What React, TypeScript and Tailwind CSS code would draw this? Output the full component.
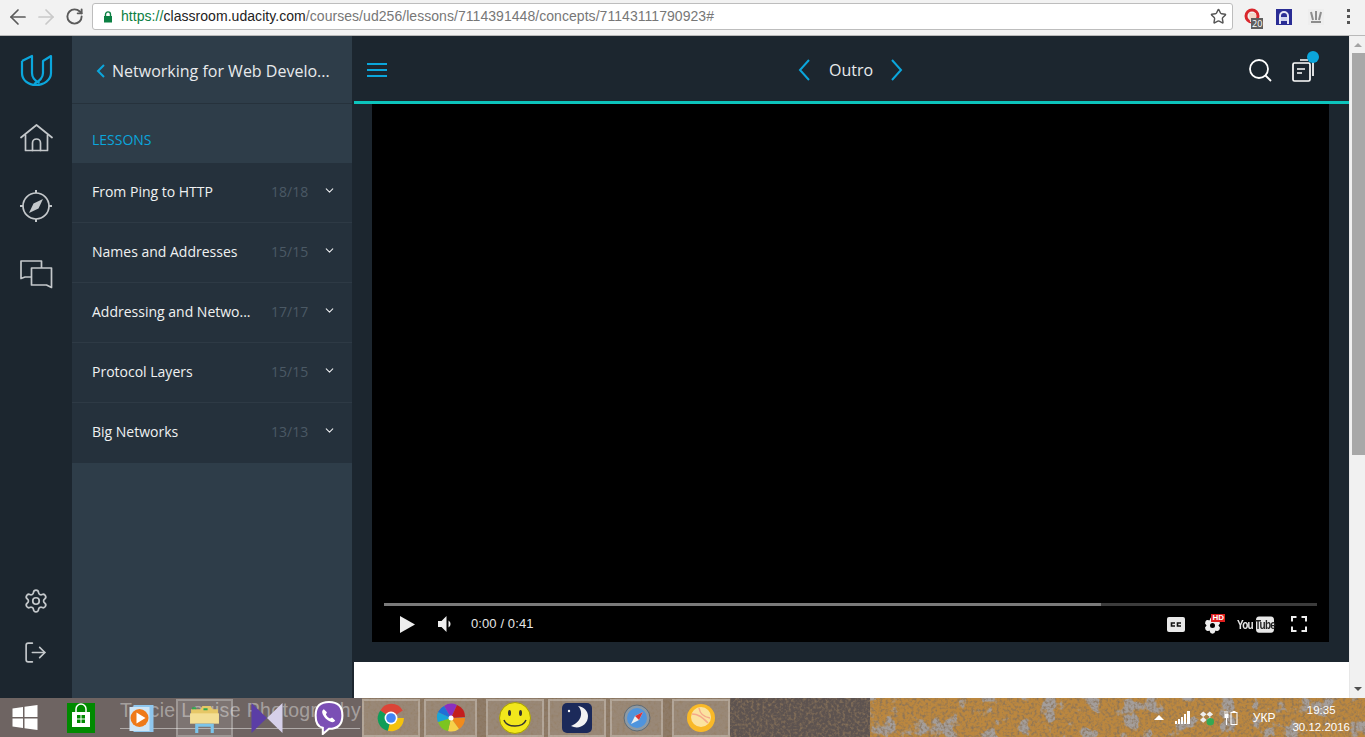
import { ReactNode } from "react"
import { ArrowLeft, ArrowRight, ChevronDown, LogOut, RotateCw, Settings, Star } from "lucide-react"

const lessons = [
  { title: "From Ping to HTTP", count: "18/18" },
  { title: "Names and Addresses", count: "15/15" },
  { title: "Addressing and Netwo...", count: "17/17" },
  { title: "Protocol Layers", count: "15/15" },
  { title: "Big Networks", count: "13/13" },
]

const Toolbar = () => (
  <div className="flex h-9 shrink-0 items-center border-b border-[#b9b9b9] bg-[#f2f2f2] pb-[2px] pl-[6px] font-['Open_Sans',sans-serif]">
    <ArrowLeft size={24} strokeWidth={1.7} className="shrink-0 text-[#5a5a5a]" />
    <ArrowRight size={24} strokeWidth={1.7} className="ml-[4px] shrink-0 text-[#c9c9c9]" />
    <RotateCw size={19} strokeWidth={2.4} className="ml-[7px] shrink-0 text-[#5a5a5a]" />
    <div className="ml-[8px] flex h-[27px] w-[1141px] shrink-0 items-center rounded-[3px] border border-[#bdbdbd] bg-white pl-[10px] pr-[5px]">
      <svg width="10" height="12" viewBox="0 0 10 12" className="shrink-0">
        <path d="M2.5 5V3.4a2.5 2.5 0 0 1 5 0V5" fill="none" stroke="#0b8043" strokeWidth="1.4" />
        <rect x="1" y="5" width="8" height="6.5" fill="#0b8043" />
      </svg>
      <span className="ml-[8px] whitespace-nowrap font-['Liberation_Sans',sans-serif] text-[14px] tracking-[0.05px] text-[#777]">
        <span className="text-[#0b8043]">https://</span>
        <span className="text-[#222]">classroom.udacity.com</span>
        /courses/ud256/lessons/7114391448/concepts/71143111790923#
      </span>
      <Star size={17} strokeWidth={2} className="ml-auto text-[#555]" />
    </div>
    {/* extension icons */}
    <div className="relative ml-[11px] h-[18px] w-[18px] shrink-0">
      <svg width="18" height="18" viewBox="0 0 18 18">
        <circle cx="8" cy="8" r="6" fill="none" stroke="#d9262c" strokeWidth="3" />
        <path d="M5 5h7v6l-3 3H6z" fill="#f4d6c8" />
      </svg>
      <span className="absolute left-[7px] top-[10px] bg-[#5f5f5f] px-[1px] text-[9px] leading-[11px] text-white">20</span>
    </div>
    <svg width="16" height="16" viewBox="0 0 16 16" className="ml-[14px] shrink-0">
      <rect width="16" height="16" fill="#2a2d95" />
      <path d="M3 15V7a5 5 0 0 1 10 0v8h-2V7a3 3 0 0 0-6 0v8z" fill="#e8e8f5" />
      <rect x="5" y="8" width="6" height="4" fill="#cfd3ef" />
    </svg>
    <svg width="16" height="16" viewBox="0 0 16 16" className="ml-[16px] shrink-0">
      <rect width="16" height="16" fill="#eeeeee" />
      <path d="M3 3l2 8M8 2v9M13 3l-2 8M3 13h10" stroke="#8d8d8d" strokeWidth="2" fill="none" />
    </svg>
    <div className="ml-[23px] flex flex-col gap-[3px]">
      <span className="h-[3px] w-[3px] bg-[#555]" />
      <span className="h-[3px] w-[3px] bg-[#555]" />
      <span className="h-[3px] w-[3px] bg-[#555]" />
    </div>
  </div>
)

const Rail = () => (
  <div className="flex w-[72px] shrink-0 flex-col items-center bg-[#1c262f] text-[#c4c8cb]">
    <svg width="33" height="33" viewBox="0 0 33 33" fill="none" stroke="#0ba6dc" strokeWidth="2.2" strokeLinejoin="round" className="ml-[1px] mt-[18px]">
      <path d="M2 7 12 2V19C12 24 15 27 19.500 29" />
      <path d="M2 7V19C2 26 8 31 16 31 24 31 31 26 31 19V2L23 7V19C23 23 20 27 14 30" />
    </svg>
    <svg width="33" height="28" viewBox="0 0 33 28" fill="none" stroke="currentColor" strokeWidth="1.7" strokeLinejoin="round" strokeLinecap="round" className="mt-[37px]">
      <path d="M1 13.500 16.500 1 32 13.500" />
      <path d="M5.500 11v15.500h22V11" />
      <path d="M12.500 26.500V19a4 4 0 0 1 8 0v7.500" />
    </svg>
    <svg width="32" height="32" viewBox="0 0 32 32" fill="none" stroke="currentColor" strokeWidth="1.7" className="mt-[38px]">
      <circle cx="16" cy="16" r="13" />
      <path d="M16 0v3M16 29v3M0 16h3M29 16h3" strokeWidth="2" />
      <path d="M23 9 18.500 18.500 9 23l4.500-9.500z" fill="currentColor" stroke="none" />
    </svg>
    <svg width="33" height="29" viewBox="0 0 33 29" fill="none" stroke="currentColor" strokeWidth="1.7" strokeLinejoin="round" className="mt-[38px]">
      <path d="M11 17H5L1 18.500V1h20.500v7" />
      <path d="M11.500 8h20v19.500l-5-2.500h-15z" />
    </svg>
    <Settings size={26} strokeWidth={1.6} className="-ml-[1px] mt-auto" />
    <LogOut size={25} strokeWidth={1.6} className="-ml-[1px] mb-[33px] mt-[26px] -scale-x-100 rotate-180" />
  </div>
)

const Sidebar = () => (
  <div className="flex w-[280px] shrink-0 flex-col bg-[#2e3d49] font-['Open_Sans',sans-serif]">
    <div className="flex h-[68px] shrink-0 items-center border-b border-[#26323c] pl-[24px] pt-[2px]">
      <svg width="9" height="14" viewBox="0 0 9 14" fill="none" stroke="#0ba6dc" strokeWidth="2">
        <path d="M8 1 2 7l6 6" />
      </svg>
      <span className="ml-[7px] whitespace-nowrap text-[16px] text-[#e8eaec]">Networking for Web Develo...</span>
    </div>
    <div className="flex h-[59px] shrink-0 items-center pl-[20px] pt-[12px] text-[14px] text-[#0ba6dc]">LESSONS</div>
    {lessons.map((l) => (
      <div key={l.title} className="flex h-[60px] shrink-0 items-center border-b border-[#2e3a45] bg-[#25313c] pb-[2px] pl-[20px] last:border-b-transparent">
        <span className="w-[178px] whitespace-nowrap text-[14px] text-[#f0f1f2]">{l.title}</span>
        <span className="ml-[1px] w-[52px] text-[14px] text-[#4b5965]">{l.count}</span>
        <ChevronDown size={13} strokeWidth={2} className="mb-[3px] text-[#e8eaec]" />
      </div>
    ))}
  </div>
)

const PlayerControls = () => (
  <div className="mt-auto px-[12px] pb-[5px] font-['Liberation_Sans',sans-serif]">
    <div className="flex h-[3px]">
      <div className="w-[717px] bg-[#7a7a7a]" />
      <div className="flex-1 bg-[#3c3c3c]" />
    </div>
    <div className="mt-[5px] flex h-[26px] items-center text-[13px] text-[#e6e6e6]">
      <svg width="15" height="17" viewBox="0 0 15 17" className="ml-[16px]"><path d="M0 0 15 8.500 0 17z" fill="#eee" /></svg>
      <svg width="17" height="16" viewBox="0 0 17 16" className="ml-[22px]">
        <path d="M1 5h3.500L9.500 0v16L4.500 11H1z" fill="#eee" />
        <path d="M11.500 4.500a4 4 0 0 1 0 7z" fill="#eee" />
      </svg>
      <span className="ml-[17px] tracking-[0.1px]">0:00 / 0:41</span>
      <svg width="18" height="15" viewBox="0 0 18 15" className="ml-auto">
        <rect width="18" height="15" rx="2" fill="#e8e8e8" />
        <path d="M8 6H4.500v3H8M14 6h-3.500v3H14" fill="none" stroke="#111" strokeWidth="1.600" />
      </svg>
      <div className="relative ml-[19px] h-[18px] w-[19px]">
        <Settings size={17} strokeWidth={3} className="absolute top-[2px] fill-[#eee] text-[#eee]" />
        <span className="absolute left-[6px] top-[8px] h-[5px] w-[5px] rounded-full bg-black" />
        <span className="absolute -right-[2px] -top-[1px] bg-[#e01e1e] px-[1px] text-[8px] font-bold leading-[8px] text-white">HD</span>
      </div>
      <div className="ml-[14px] flex h-[17px] w-[37px] scale-y-125 items-center text-[10px] font-bold tracking-[-0.8px]">
        <span className="w-[19px] text-[#e8e8e8]">You</span>
        <span className="flex h-[13px] w-[18px] items-center justify-center rounded-[3px] bg-[#e8e8e8] text-[#222]">Tube</span>
      </div>
      <svg width="16" height="16" viewBox="0 0 16 16" fill="none" stroke="#eee" strokeWidth="2" className="ml-[17px] mr-[10px]">
        <path d="M1 5.500V1h4.500M10.500 1H15v4.500M15 10.500V15h-4.500M5.500 15H1v-4.500" />
      </svg>
    </div>
  </div>
)

const Main = () => (
  <div className="flex min-w-0 flex-1 flex-col bg-[#1c262f] pl-[2px]">
    <div className="flex h-[65px] shrink-0 items-center pl-[13px] pt-[3px] font-['Open_Sans',sans-serif]">
      <div className="flex flex-col gap-[4px]">
        <span className="h-[2px] w-[20px] bg-[#0ba6dc]" />
        <span className="h-[2px] w-[20px] bg-[#0ba6dc]" />
        <span className="h-[2px] w-[20px] bg-[#0ba6dc]" />
      </div>
      <div className="ml-[411px] flex items-center">
        <svg width="12" height="22" viewBox="0 0 12 22" fill="none" stroke="#0ba6dc" strokeWidth="2">
          <path d="M11 1 2 11l9 10" />
        </svg>
        <span className="ml-[19px] w-[44px] whitespace-nowrap text-[16px] text-[#e8eaec]">Outro</span>
        <svg width="12" height="22" viewBox="0 0 12 22" fill="none" stroke="#0ba6dc" strokeWidth="2" className="ml-[18px]">
          <path d="M1 1l9 10-9 10" />
        </svg>
      </div>
      <svg width="23" height="23" viewBox="0 0 23 23" fill="none" stroke="#fff" strokeWidth="1.800" className="ml-auto">
        <circle cx="10" cy="10" r="9" />
        <path d="M16.500 16.500 22 22" />
      </svg>
      <div className="relative ml-[20px] mr-[31px] h-[26px] w-[26px]">
        <svg width="26" height="26" viewBox="0 0 26 26" fill="none" stroke="#fff" strokeWidth="1.700">
          <rect x="1" y="6" width="17" height="18" rx="1.500" />
          <path d="M5 12h8M5 16h5M8 3h8M21 4v15" />
        </svg>
        <span className="absolute -right-[1px] -top-[6px] h-[12px] w-[12px] rounded-full bg-[#0ba6dc]" />
      </div>
    </div>
    <div className="h-[3px] shrink-0 bg-[#0cc4bc]" />
    <div className="flex h-[558px] shrink-0 pb-[20px] pl-[18px] pr-[20px]">
      <div className="flex flex-1 flex-col bg-black">
        <PlayerControls />
      </div>
    </div>
    <div className="flex-1 bg-white" />
  </div>
)

const Scrollbar = () => (
  <div className="flex w-[16px] shrink-0 flex-col items-center border-l border-[#e7e7e7] bg-[#f1f1f1]">
    <div className="flex h-[17px] w-full items-center justify-center">
      <span className="border-x-[4px] border-b-[4px] border-x-transparent border-b-[#a3a3a3]" />
    </div>
    <div className="ml-[2px] h-[402px] w-[14px] bg-[#a8a8a8]" />
    <div className="mb-[7px] mt-auto border-x-[4px] border-t-[4px] border-x-transparent border-t-[#505050]" />
  </div>
)

const Slot = ({ w, children }: { w: number; children: ReactNode }) => (
  <div style={{ width: w }} className="flex h-[38px] shrink-0 items-center justify-center border-2 border-white/25 bg-white/10">
    {children}
  </div>
)

const Wallpaper = () => (
  <svg width="1365" height="39" viewBox="0 0 1365 39" className="absolute inset-0">
    <defs>
      <filter id="grain" x="0" y="0" width="100%" height="100%">
        <feTurbulence type="fractalNoise" baseFrequency="0.35" numOctaves="2" seed="4" />
        <feColorMatrix values="0 0 0 0 0.25 0 0 0 0 0.17 0 0 0 0 0.1 0 0 0 2.4 -1.05" />
      </filter>
      <filter id="patches" x="0" y="0" width="100%" height="100%">
        <feTurbulence type="fractalNoise" baseFrequency="0.05" numOctaves="4" seed="23" />
        <feColorMatrix values="0 0 0 0 0.37 0 0 0 0 0.34 0 0 0 0 0.33 0 0 0 12 -6.9" />
      </filter>
    </defs>
    <rect width="1365" height="39" fill="#6e6462" />
    <rect x="362" width="368" height="39" fill="#8e7b68" />
    <rect x="730" width="140" height="39" fill="#5d5350" />
    <rect x="870" width="495" height="39" fill="#bb873f" />
    <rect x="870" width="495" height="39" filter="url(#patches)" />
    <rect x="362" width="1003" height="39" filter="url(#grain)" />
  </svg>
)

const Taskbar = () => (
  <div className="relative h-[39px] shrink-0 overflow-hidden font-['Liberation_Sans',sans-serif]">
    <Wallpaper />
    <span className="absolute left-[120px] top-0 whitespace-nowrap text-[19.500px] leading-[25px] tracking-[0.35px] text-white/40">Tracie Louise Photography</span>
    <span className="absolute left-[120px] top-[30px] h-[1px] w-[240px] bg-white/45" />
    <div className="relative flex h-full items-center">
      <svg width="26" height="25" viewBox="0 0 25 25" className="ml-[12px] shrink-0">
        <path d="M0 3.500 10.500 2v10H0zM12 1.800 25 0v12H12zM0 13.500h10.500V23L0 21.500zM12 13.500h13V25l-13-1.800z" fill="#fff" />
      </svg>
      <svg width="30" height="30" viewBox="0 0 28 30" className="ml-[28px] shrink-0">
        <rect width="28" height="30" fill="#008a00" />
        <path d="M9 9V6a5 5 0 0 1 10 0v3" fill="none" stroke="#fff" strokeWidth="1.500" />
        <path d="M5 9h18v15H5z" fill="#fff" />
        <path d="M10 12h3.500v3.500H10zM14.500 12H18v3.500h-3.500zM10 16.500h3.500V20H10zM14.500 16.500H18V20h-3.500z" fill="#008a00" />
      </svg>
      <svg width="27" height="30" viewBox="0 0 26 30" className="ml-[32px] shrink-0">
        <rect x="5" y="2" width="20" height="27" fill="#8fc7ef" />
        <rect x="1" y="4" width="20" height="24" fill="#cfe6f7" />
        <circle cx="11" cy="15" r="9" fill="#ef7a1a" />
        <path d="M8 9.500 17 15l-9 5.500z" fill="#fff" />
      </svg>
      <div className="ml-[21px] mt-[1px] shrink-0">
        <Slot w={57}>
          <svg width="31" height="31" viewBox="0 0 30 30">
            <path d="M2 6h9l2-3h8l2 3h5v12H2z" fill="#e6c766" />
            <path d="M3 4h4v2H3zM14 5h4v2h-4z" fill="#2fa84f" />
            <path d="M1 10h28v10H1z" fill="#f3de94" />
            <path d="M6 20h18v9h-3v-6H9v6H6z" fill="#7cc4ea" />
          </svg>
        </Slot>
      </div>
      <svg width="32" height="32" viewBox="0 0 31 32" className="ml-[18px] shrink-0">
        <path d="M0 1 15.500 16 0 31z" fill="#5b3ea6" />
        <path d="M31 1 15.500 16 31 31z" fill="#d6d0ea" />
      </svg>
      <svg width="30" height="34" viewBox="0 0 28 33" className="ml-[31px] shrink-0">
        <path d="M14 1C5 1 1 5 1 14c0 7 2 11 7 12v6l6-5c9 0 13-4 13-13S23 1 14 1z" fill="#7b4fb5" stroke="#fff" strokeWidth="2" />
        <path d="M9 8c-2 1-2 3-1 5 1.500 3 4 5.500 7 7 2 1 4 1 5-1l-3-3-2 1c-2-1-3-2-4-4l1-2z" fill="#fff" />
      </svg>
      <div className="ml-[18px] mt-[1px] flex shrink-0">
        <Slot w={58}>
          <svg width="30" height="30" viewBox="0 0 28 28">
            <path d="M14 14 4 7a12 12 0 0 1 21 0z" fill="#dc4437" />
            <path d="M14 14h12a12 12 0 0 1-15 12z" fill="#f4c20d" />
            <path d="M14 14 11 26A12 12 0 0 1 4 7z" fill="#0f9d58" />
            <circle cx="14" cy="14" r="6" fill="#fff" />
            <circle cx="14" cy="14" r="4.500" fill="#4285f4" />
          </svg>
        </Slot>
        <div className="ml-[4px]">
          <Slot w={53}>
            <svg width="30" height="30" viewBox="0 0 30 30">
              <path d="M15 15 8 3a13 13 0 0 1 13-1z" fill="#8a2fc0" />
              <path d="M15 15 21 2a13 13 0 0 1 8 12z" fill="#c41e1e" />
              <path d="M15 15h14a13 13 0 0 1-6 11z" fill="#f08a1c" />
              <path d="M15 15l8 11a13 13 0 0 1-11 2z" fill="#f7d24a" />
              <path d="M15 15l-3 13a13 13 0 0 1-10-9z" fill="#7cc520" />
              <path d="M15 15 2 19a13 13 0 0 1 0-10z" fill="#19a5d8" />
              <path d="M15 15 2 9a13 13 0 0 1 6-6z" fill="#1f6fd8" />
              <circle cx="15" cy="15" r="2.500" fill="#fff" />
            </svg>
          </Slot>
        </div>
        <div className="ml-[9px]">
          <Slot w={58}>
            <svg width="32" height="32" viewBox="0 0 32 32">
              <circle cx="16" cy="16" r="15.500" fill="#f2e71c" stroke="#a8a000" />
              <ellipse cx="10.500" cy="11" rx="1.500" ry="3" fill="#333" />
              <ellipse cx="21.500" cy="11" rx="1.500" ry="3" fill="#333" />
              <path d="M5 18c3 8 19 8 22 0" fill="none" stroke="#333" strokeWidth="1.500" />
            </svg>
          </Slot>
        </div>
        <div className="ml-[4px]">
          <Slot w={58}>
            <svg width="30" height="30" viewBox="0 0 30 30">
              <rect width="30" height="30" rx="5" fill="#1c2a5a" />
              <path d="M16 3c5 5 5 15-7 20 8 4 17-1 17-10 0-5-4-9-10-10z" fill="#f2f2f2" />
              <circle cx="7" cy="8" r="1.200" fill="#fff" />
            </svg>
          </Slot>
        </div>
        <div className="ml-[4px]">
          <Slot w={53}>
            <svg width="28" height="28" viewBox="0 0 28 28">
              <circle cx="14" cy="14" r="13" fill="#8d9aa5" stroke="#5f6a73" />
              <circle cx="14" cy="14" r="10" fill="#4f94dd" />
              <path d="M20 8 16 16 8 20l4-8z" fill="#eee" />
              <path d="M20 8 16 16l-4-4z" fill="#d33" />
            </svg>
          </Slot>
        </div>
        <div className="ml-[9px]">
          <Slot w={58}>
            <svg width="28" height="28" viewBox="0 0 28 28">
              <circle cx="14" cy="14" r="14" fill="#f9b928" />
              <circle cx="14" cy="13" r="10" fill="#fbe3a0" />
              <path d="M5 10c6 0 10 3 16 9M12 4c1 6 4 9 11 10" fill="none" stroke="#f5a98a" strokeWidth="1.500" />
            </svg>
          </Slot>
        </div>
      </div>
      {/* system tray */}
      <div className="ml-auto flex items-center text-white">
        <span className="border-x-[5px] border-b-[5px] border-x-transparent border-b-white" />
        <svg width="15" height="13" viewBox="0 0 15 13" className="ml-[11px]" fill="#fff">
          <path d="M0 10h2v3H0zM3 8h2v5H3zM6 6h2v7H6zM9 3h2v10H9zM12 0h3v13h-3z" />
        </svg>
        <svg width="16" height="16" viewBox="0 0 17 16" className="ml-[9px]">
          <path d="M1 4 4.500 1 8 4 4.500 7zM8 4l3.500-3L15 4l-3.500 3zM1 10l3.500-3L8 10l-3.500 3zM8 10l3.500-3L15 10l-3.500 3z" fill="#eee" />
          <circle cx="12" cy="12" r="4" fill="#34a853" />
        </svg>
        <svg width="16" height="15" viewBox="0 0 15 15" fill="#fff" className="ml-[8px]">
          <path d="M1 4V1h1v3h1V1h1v3h1v4H3.500v7h-1V8H1z" />
          <path d="M7 2h2V1h3v1h2v13H7zM8 3v11h5V3z" />
        </svg>
        <span className="ml-[14px] text-[12px]">УКР</span>
        <div className="ml-[17px] mr-[15px] flex flex-col items-center pt-[2px] text-[11.500px] leading-[17px]">
          <span>19:35</span>
          <span>30.12.2016</span>
        </div>
      </div>
    </div>
  </div>
)

const App = () => (
  <div className="flex h-[737px] w-[1365px] flex-col overflow-hidden bg-white">
    <Toolbar />
    <div className="flex min-h-0 flex-1">
      <Rail />
      <Sidebar />
      <Main />
      <Scrollbar />
    </div>
    <Taskbar />
  </div>
)

export default App
